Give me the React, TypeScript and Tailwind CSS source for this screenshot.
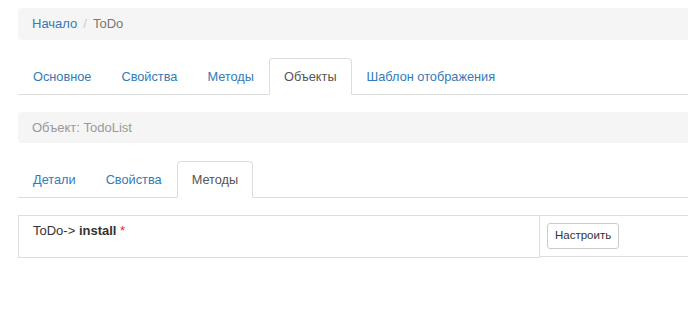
import React from 'react';

// Top-level and nested tab sets
const MAIN_TABS = ['Основное', 'Свойства', 'Методы', 'Объекты', 'Шаблон отображения'];
const OBJECT_TABS = ['Детали', 'Свойства', 'Методы'];

const Tabs = ({ items, active }: { items: string[]; active: string }) => (
    <ul className="flex border-b border-[#ddd] h-[37px]">
        {items.map(item => {
            const isActive = item === active;
            return (
                <li key={item} className="-mb-px">
                    <a
                        href="#"
                        className={`block h-[37px] px-[14px] leading-[36px] rounded-t-[4px] border ${
                            isActive
                                ? 'border-[#ddd] border-b-white bg-white text-[#555]'
                                : 'border-transparent text-[#337ab7]'
                        }`}
                    >
                        {item}
                    </a>
                </li>
            );
        })}
    </ul>
);

export default function App() {
    return (
        <div className="w-[688px] h-[314px] overflow-hidden bg-white font-['Liberation_Sans',Arial,sans-serif] text-[13px] text-[#333]">
            <div className="w-[720px] ml-[18px] pt-[8px]">
                {/* Breadcrumb */}
                <div className="h-[32px] bg-[#f5f5f5] rounded-[4px] px-[14px] flex items-center">
                    <a href="#" className="text-[#337ab7]">Начало</a>
                    <span className="px-[6px] text-[#ccc]">/</span>
                    <span className="text-[#777]">ToDo</span>
                </div>

                <div className="mt-[18px] text-[12.75px]">
                    <Tabs items={MAIN_TABS} active="Объекты" />
                </div>

                {/* Object header */}
                <div className="mt-[17px] h-[31px] bg-[#f5f5f5] rounded-[4px] px-[14px] flex items-center text-[#999]">
                    Объект: TodoList
                </div>

                <div className="mt-[18px] text-[12.75px]">
                    <Tabs items={OBJECT_TABS} active="Методы" />
                </div>

                {/* Methods table */}
                <div className="mt-[17px] flex items-start">
                    <div className="w-[522px] h-[43px] border border-[#ddd] px-[14px] pt-[5px]">
                        ToDo-&gt; <b className="font-bold">install</b> <span className="text-[#e22]">*</span>
                    </div>
                    <div className="flex-1 h-[42px] border-t border-b border-[#ddd] px-[7px] pt-[7px]">
                        <button className="h-[26px] px-[7px] text-[11.5px] text-[#333] bg-white border border-[#ccc] rounded-[3px]">
                            Настроить
                        </button>
                    </div>
                </div>
            </div>
        </div>
    );
}
